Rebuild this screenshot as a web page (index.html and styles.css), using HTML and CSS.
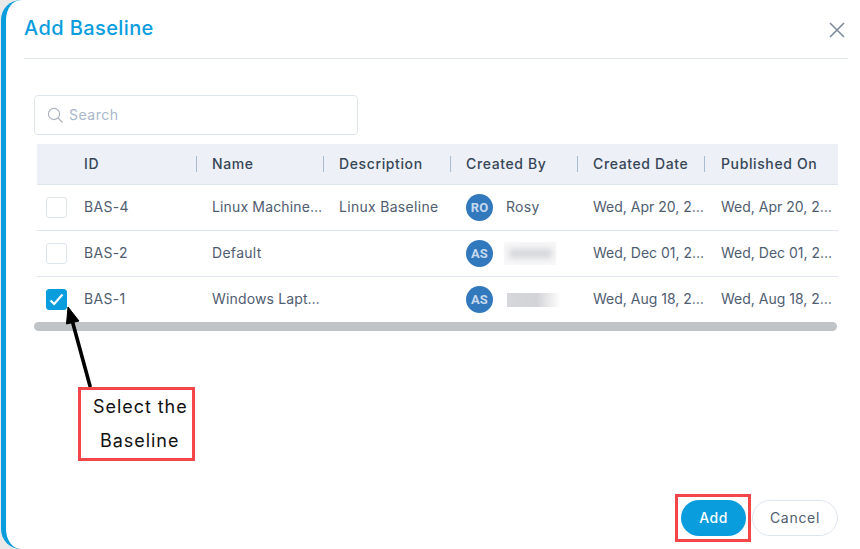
FILE: index.html
```html
<!DOCTYPE html>
<html lang="en">
<head>
<meta charset="utf-8">
<title>Add Baseline</title>
<link rel="stylesheet" href="styles.css">
</head>
<body>
<div class="drawer">
  <header class="head">
    <h1 class="title">Add Baseline</h1>
    <svg class="close" width="16" height="16" viewBox="0 0 16 16"><path d="M1 1 L15 15 M15 1 L1 15" stroke="#7b8a9c" stroke-width="1.6" fill="none"/></svg>
  </header>
  <div class="search">
    <svg width="17" height="17" viewBox="0 0 17 17"><circle cx="7" cy="7" r="5.6" fill="none" stroke="#a9b1bc" stroke-width="1.1"/><path d="M11 11 L15.5 15.5" stroke="#a9b1bc" stroke-width="1.1"/></svg>
    <span class="placeholder">Search</span>
  </div>
  <div class="table">
    <div class="row hrow">
      <div class="c chk"></div>
      <div class="c id"><span>ID</span></div>
      <div class="c"><span>Name</span></div>
      <div class="c"><span>Description</span></div>
      <div class="c"><span>Created By</span></div>
      <div class="c"><span>Created Date</span></div>
      <div class="c last"><span>Published On</span></div>
    </div>
    <div class="row">
      <div class="c chk"><i class="box"></i></div>
      <div class="c id"><span>BAS-4</span></div>
      <div class="c"><span class="cut">Linux Machine Baseline</span></div>
      <div class="c"><span>Linux Baseline</span></div>
      <div class="c user"><b class="avatar">RO</b><span>Rosy</span></div>
      <div class="c"><span class="cut date">Wed, Apr 20, 2022</span></div>
      <div class="c last"><span class="cut date">Wed, Apr 20, 2022</span></div>
    </div>
    <div class="row">
      <div class="c chk"><i class="box"></i></div>
      <div class="c id"><span>BAS-2</span></div>
      <div class="c"><span>Default</span></div>
      <div class="c"></div>
      <div class="c user"><b class="avatar">AS</b><em class="smudge one"></em></div>
      <div class="c"><span class="cut date">Wed, Dec 01, 2021</span></div>
      <div class="c last"><span class="cut date">Wed, Dec 01, 2021</span></div>
    </div>
    <div class="row">
      <div class="c chk"><i class="box on"><svg width="15" height="13" viewBox="0 0 15 13"><path d="M1.5 7.5 L5.2 11 L13.5 1.5" fill="none" stroke="#fff" stroke-width="2.2"/></svg></i></div>
      <div class="c id"><span>BAS-1</span></div>
      <div class="c"><span class="cut">Windows Laptop Baseline</span></div>
      <div class="c"></div>
      <div class="c user"><b class="avatar">AS</b><em class="smudge two"></em></div>
      <div class="c"><span class="cut date">Wed, Aug 18, 2021</span></div>
      <div class="c last"><span class="cut date">Wed, Aug 18, 2021</span></div>
    </div>
  </div>
  <div class="scrollbar"></div>
  <footer class="foot">
    <button class="btn add">Add</button>
    <button class="btn cancel">Cancel</button>
  </footer>
</div>
<svg class="arrow" width="40" height="90" viewBox="0 0 40 90"><path d="M27 82 L9 16" stroke="#000" stroke-width="3.6" stroke-linecap="round" fill="none"/><path d="M5 3 L16 17 L3.5 20 Z" fill="#000" stroke="#000" stroke-width="1"/></svg>
<div class="note">Select the<br><span class="indent">Baseline</span></div>
<div class="addmark"></div>
</body>
</html>
```
FILE: styles.css
```css
* { box-sizing: border-box; }
html, body { margin: 0; height: 100%; }
body {
  width: 860px; height: 549px; overflow: hidden; position: relative;
  background: #e9e9e9; padding-left: 1px;
  font-family: Inter, "Noto Sans", sans-serif; color: #4f5d70;
}
.drawer {
  height: 549px; background: #fff;
  border-left: 5px solid #099dde;
  border-radius: 20px 0 0 20px;
  padding: 0 12px 13px 18px;
  display: flex; flex-direction: column;
}
.head {
  height: 59px; border-bottom: 1px solid #dfe5ee;
  display: flex; justify-content: space-between; align-items: flex-start;
}
.title { margin: 15px 0 0; font-size: 20px; line-height: 26px; font-weight: 500; color: #099dde; letter-spacing: .4px; }
.close { margin: 22px 3px 0 0; }
.search {
  width: 324px; height: 40px; margin: 36px 0 0 10px;
  border: 1px solid #dfe5ee; border-radius: 4px;
  display: flex; align-items: center; gap: 5px; padding-left: 12px;
}
.placeholder { font-size: 14px; color: #a9b7cb; letter-spacing: .5px; margin-bottom: 2px; }
.table { width: 801px; margin: 9px 0 0 13px; }
.row { display: flex; height: 46px; border-bottom: 1px solid #dfe3ec; font-size: 14px; letter-spacing: .3px; }
.row:last-child { border-bottom: 0; height: 45px; }
.hrow { height: 41px; background: #edf0f6; color: #364658; font-weight: 500; border-bottom: 1px solid #dfe5ee; letter-spacing: .62px; }
.c { width: 127px; flex: none; display: flex; align-items: center; padding-left: 15px; position: relative; white-space: nowrap; }
.c > span { margin-bottom: 2px; }
.c.id { padding-left: 14px; }
.c.chk { width: 33px; padding-left: 9px; }
.c.last { width: 133px; padding-left: 16px; }
.hrow .c:not(.chk):not(.last)::after {
  content: ""; position: absolute; right: 0; top: 12px; height: 16px; width: 1px; background: #a9bbd0;
}
.cut { display: block; width: 111px; overflow: hidden; text-overflow: ellipsis; letter-spacing: .15px; }
.cut.date { width: 113px; letter-spacing: 0; }
.box { display: flex; align-items: center; justify-content: center; width: 21px; height: 21px; border: 1px solid #dfe5ee; border-radius: 3px; background: #fff; }
.box.on { background: #099dde; border-color: #099dde; }
.user { gap: 13px; }
.avatar {
  width: 27px; height: 27px; border-radius: 50%; background: #3278bd; color: #c5d9ee;
  display: flex; align-items: center; justify-content: center; flex: none;
  font: 700 13px "Roboto", sans-serif; letter-spacing: .2px;
}
.smudge { display: block; position: relative; }
.smudge.one { width: 52px; height: 23px; margin-left: -2px; background: #f7f7f8; }
.smudge.one::after {
  content: ""; position: absolute; left: 5px; right: 4px; top: 7px; height: 9px;
  background: #d4d5d8; filter: blur(3px);
}
.smudge.two {
  width: 54px; height: 14px; margin-left: 1px;
  background: linear-gradient(90deg, #d6d7da 0, #d2d3d6 55%, #ececee 80%, #fff 100%);
}
.scrollbar { width: 803px; height: 9px; margin: 0 0 0 10px; background: #c1c4c7; border-radius: 5px; }
.foot { margin-top: auto; display: flex; justify-content: flex-end; gap: 6px; width: 814px; }
.btn { height: 36px; border-radius: 18px; font: 500 14px Inter, sans-serif; letter-spacing: .5px; padding: 0 0 2px; }
.add { width: 65px; background: #099dde; border: 0; color: #fff; }
.cancel { width: 86px; background: #fff; border: 1px solid #dfe5ee; color: #4f5d70; font-weight: 400; letter-spacing: .7px; }
.arrow { position: absolute; left: 63px; top: 304px; }
.note {
  position: absolute; left: 78px; top: 387px; width: 117px; height: 74px;
  border: 3px solid #f44648; background: #fff; color: #111;
  font-size: 18px; line-height: 34px; padding: 0 0 0 12px; letter-spacing: .95px;
}
.indent { padding-left: 7px; }
.addmark { position: absolute; left: 675px; top: 494px; width: 76px; height: 48px; border: 3px solid #f44648; }
```
